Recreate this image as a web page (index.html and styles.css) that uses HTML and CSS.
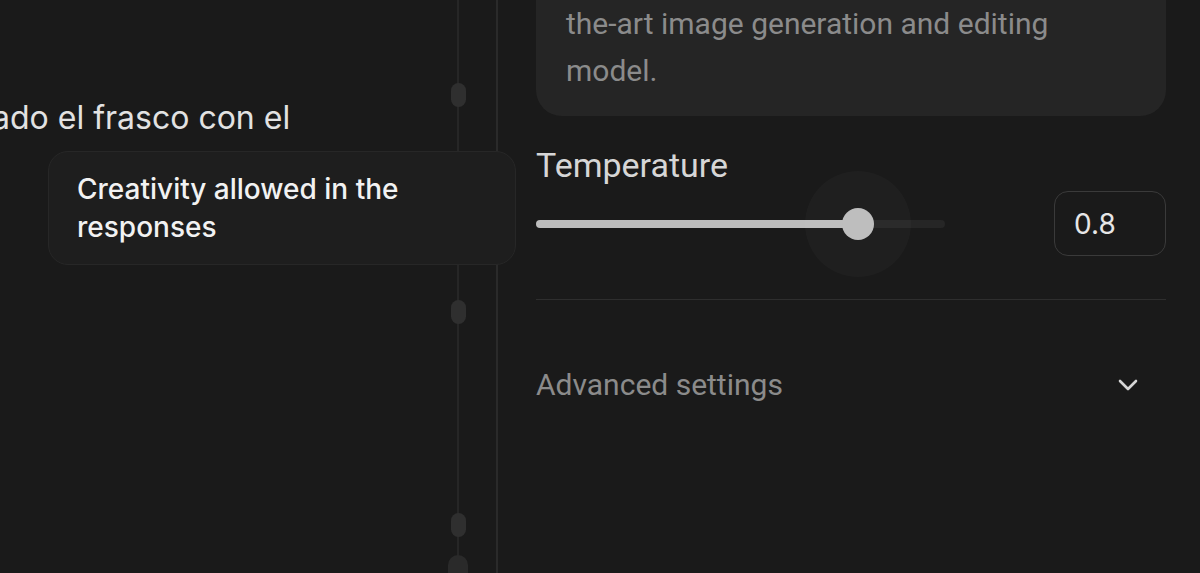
FILE: index.html
```html
<!DOCTYPE html>
<html>
<head>
<meta charset="utf-8">
<link rel="stylesheet" href="styles.css">
</head>
<body>
<div class="app">
  <section class="chat">
    <p class="message">ado el frasco con el</p>
    <div class="timeline">
      <span class="mark m1"></span>
      <span class="mark m2"></span>
      <span class="mark m3"></span>
      <span class="mark m4"></span>
    </div>
  </section>
  <aside class="settings">
    <div class="model-card">
      <p>the-art image generation and editing<br>model.</p>
    </div>
    <div class="field-label">Temperature</div>
    <div class="slider-row">
      <div class="slider">
        <div class="track">
          <div class="fill" style="width: 78.7%"></div>
          <div class="thumb" style="left: 78.7%"><span class="halo"></span></div>
        </div>
      </div>
      <div class="value-box">0.8</div>
    </div>
    <div class="divider"></div>
    <div class="advanced">
      <span>Advanced settings</span>
      <svg class="chevron" width="22" height="14" viewBox="0 0 22 14"><path d="M3 3 L11 11 L19 3" fill="none" stroke="#d6d6d6" stroke-width="2.6" stroke-linecap="round" stroke-linejoin="round"/></svg>
    </div>
  </aside>
  <div class="tooltip">Creativity allowed in the responses</div>
</div>
</body>
</html>
```
FILE: styles.css
```css
html, body {
  margin: 0;
  padding: 0;
  background: #1a1a1a;
  overflow: hidden;
}
.app {
  position: relative;
  display: flex;
  width: 1200px;
  height: 573px;
  background: #1a1a1a;
  overflow: hidden;
}
.chat {
  position: relative;
  width: 496px;
  flex: none;
  border-right: 2px solid #2a2a2a;
}
.message {
  margin: 96px 0 0 -8px;
  font-family: Inter, "Noto Sans", sans-serif;
  font-size: 32px;
  line-height: 44px;
  color: #e2e2e2;
  white-space: nowrap;
}
.timeline {
  position: absolute;
  left: 457px;
  top: 0;
  bottom: 0;
  width: 2px;
  background: #262626;
}
.mark {
  position: absolute;
  left: -6px;
  width: 15px;
  height: 24px;
  border-radius: 8px;
  background: #2f2f2f;
}
.m1 { top: 83px; }
.m2 { top: 300px; }
.m3 { top: 513px; }
.m4 { top: 555px; left: -9px; width: 20px; height: 30px; border-radius: 10px; background: #2a2a2a; }
.tooltip {
  position: absolute;
  left: 48px;
  top: 151px;
  width: 468px;
  height: 114px;
  box-sizing: border-box;
  padding: 18px 28px;
  border: 1px solid #272727;
  border-radius: 20px;
  background: #1e1e1e;
  font-family: Inter, "Noto Sans", sans-serif;
  font-weight: 500;
  font-size: 28px;
  line-height: 38px;
  color: #f2f2f2;
}
.settings {
  flex: 1;
  display: flex;
  flex-direction: column;
  padding: 0 34px 0 38px;
  font-family: Roboto, "Liberation Sans", sans-serif;
}
.model-card {
  margin-top: -30px;
  padding: 30px 30px 22px;
  background: #252525;
  border-radius: 26px;
}
.model-card p {
  margin: 0;
  font-size: 30px;
  line-height: 47px;
  color: #8b8b8b;
}
.field-label {
  margin-top: 31px;
  font-size: 34px;
  line-height: 36px;
  color: #d6d6d6;
}
.slider-row {
  margin-top: 8px;
  display: flex;
  align-items: center;
  justify-content: space-between;
}
.slider {
  width: 409px;
  height: 65px;
  display: flex;
  align-items: center;
}
.track {
  position: relative;
  width: 100%;
  height: 8px;
  border-radius: 4px;
  background: #262626;
}
.fill {
  height: 100%;
  border-radius: 4px;
  background: #bdbdbd;
}
.thumb {
  position: absolute;
  top: 50%;
  width: 32px;
  height: 32px;
  margin: -16px 0 0 -16px;
  border-radius: 50%;
  background: #bdbdbd;
}
.halo {
  position: absolute;
  left: -37px;
  top: -37px;
  width: 106px;
  height: 106px;
  border-radius: 50%;
  background: rgba(255, 255, 255, 0.022);
}
.value-box {
  width: 112px;
  height: 65px;
  box-sizing: border-box;
  padding-left: 19px;
  display: flex;
  align-items: center;
  border: 1.5px solid #3a3a3a;
  border-radius: 14px;
  font-family: Inter, "Noto Sans", sans-serif;
  font-size: 28px;
  color: #e6e6e6;
}
.divider {
  margin-top: 43px;
  border-top: 1px solid #2e2e2e;
}
.advanced {
  margin-top: 67px;
  display: flex;
  align-items: center;
  justify-content: space-between;
  padding-right: 27px;
  font-size: 30px;
  line-height: 36px;
  color: #8b8b8b;
}
.chevron {
  display: block;
}
```
